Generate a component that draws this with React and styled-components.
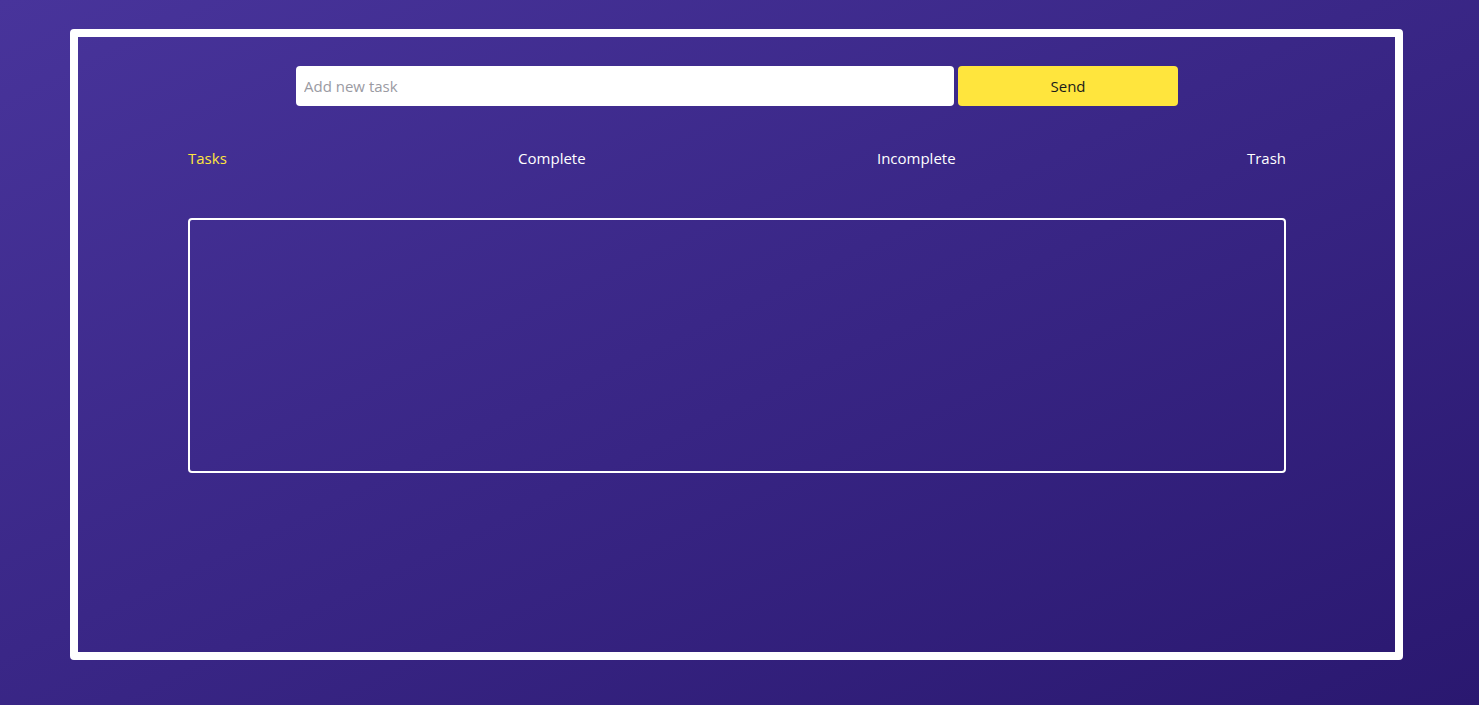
import React, { useState } from "react";
import styled, { createGlobalStyle } from "styled-components";

const GlobalStyle = createGlobalStyle`
  html, body {
    margin: 0;
    padding: 0;
  }
  body {
    font-family: "Open Sans", "Noto Sans", sans-serif;
    background: linear-gradient(to bottom right, #48349b, #2a1870);
    min-height: 100vh;
  }
`;

const TABS = ["Tasks", "Complete", "Incomplete", "Trash"];

const App = () => {
  const [task, setTask] = useState("");
  const [active, setActive] = useState("Tasks");

  return (
    <>
      <GlobalStyle />
      <Page>
        <Frame>
          <Form onSubmit={(e) => e.preventDefault()}>
            <Input
              placeholder="Add new task"
              value={task}
              onChange={(e) => setTask(e.target.value)}
            />
            <SendButton type="submit">Send</SendButton>
          </Form>
          <Tabs>
            {TABS.map((t) => (
              <Tab key={t} active={t === active} onClick={() => setActive(t)}>
                {t}
              </Tab>
            ))}
          </Tabs>
          <TaskList></TaskList>
        </Frame>
      </Page>
    </>
  );
};

export default App;

const Page = styled.div`
  padding: 29px 0 0 70px;
  height: 705px;
  box-sizing: border-box;
`;

const Frame = styled.div`
  width: 1333px;
  height: 631px;
  box-sizing: border-box;
  border: 8px solid #ffffff;
  border-radius: 4px;
  padding: 29px 109px 0 110px;
  display: flex;
  flex-direction: column;
  align-items: center;
`;

const Form = styled.form`
  display: flex;
  gap: 4px;
  width: 882px;
  height: 40px;
  margin: 0;
`;

const Input = styled.input`
  flex: 0 0 658px;
  box-sizing: border-box;
  height: 40px;
  border: none;
  border-radius: 4px;
  padding: 0 8px;
  font-family: inherit;
  font-size: 15px;
  color: #333;
  background: #fff;
  outline: none;
  &::placeholder {
    color: #9a9aa2;
  }
`;

const SendButton = styled.button`
  flex: 1;
  height: 40px;
  border: none;
  border-radius: 4px;
  background: #ffe53d;
  color: #1a1a1a;
  font-family: inherit;
  font-size: 15px;
  cursor: pointer;
`;

const Tabs = styled.div`
  display: flex;
  justify-content: space-between;
  align-self: stretch;
  margin-top: 41px;
  line-height: 22px;
`;

const Tab = styled.span`
  font-size: 15px;
  color: ${(p) => (p.active ? "#ffe53d" : "#ffffff")};
  cursor: pointer;
`;

const TaskList = styled.div`
  align-self: stretch;
  box-sizing: border-box;
  height: 255px;
  margin-top: 49px;
  border: 2px solid #ffffff;
  border-radius: 4px;
`;
